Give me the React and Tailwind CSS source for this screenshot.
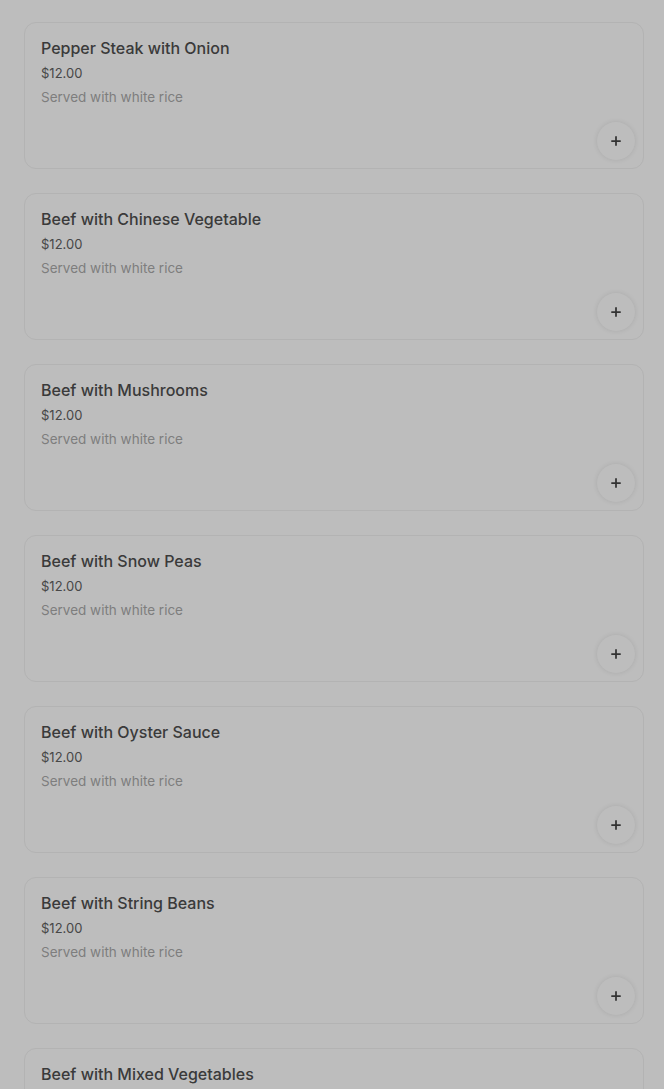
import { Plus } from "lucide-react";

const items = [
  "Pepper Steak with Onion",
  "Beef with Chinese Vegetable",
  "Beef with Mushrooms",
  "Beef with Snow Peas",
  "Beef with Oyster Sauce",
  "Beef with String Beans",
  "Beef with Mixed Vegetables",
];

const MenuCard = ({ name }) => (
  <div className="rounded-xl border border-[#b3b3b3] bg-[#bdbdbd] flex flex-col">
    <div className="px-4 pt-4">
      <h3 className="text-base leading-[18px] font-medium text-[#3a3a3a]">{name}</h3>
      <p className="text-[13px] leading-5 mt-1.5 text-[#474747]">$12.00</p>
      <p className="text-[13.5px] leading-5 mt-1 text-[#7e7e7e]">Served with white rice</p>
    </div>
    <div className="flex justify-end pr-2 pb-2 mt-[15px]">
      <button className="w-[38px] h-[38px] rounded-full bg-[#bdbdbd] shadow-[0_0_5px_rgba(0,0,0,0.1)] flex items-center justify-center text-[#333]">
        <Plus className="w-3.5 h-3.5" strokeWidth={3} />
      </button>
    </div>
  </div>
);

export default function App() {
  return (
    <div className="min-h-screen bg-[#bdbdbd] pl-6 pr-5 pt-[22px] font-['Inter',sans-serif]">
      <div className="flex flex-col gap-6">
        {items.map((name) => (
          <MenuCard key={name} name={name} />
        ))}
      </div>
    </div>
  );
}
